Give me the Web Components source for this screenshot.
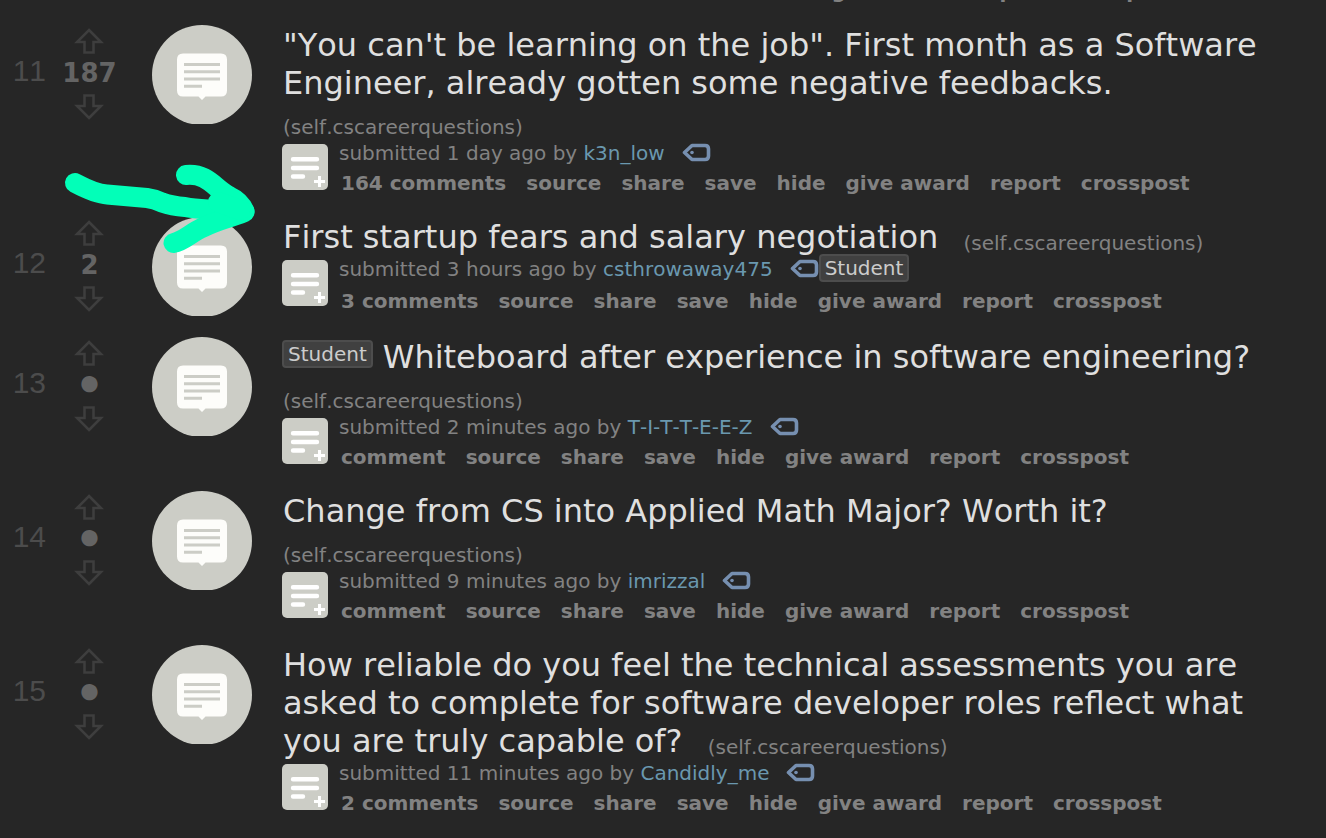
<!DOCTYPE html>
<html lang="en">
<head>
<meta charset="utf-8">
<title>cscareerquestions</title>
<style>
  body { margin: 0; background: #262626; color: #dfdfdf; font-family: Verdana, "DejaVu Sans", sans-serif; font-kerning: none; }
</style>
</head>
<body>
<link-listing>
  <entry-actions slot="previous" comments="20 comments"></entry-actions>
  <link-entry rank="11" score="187" author="k3n_low" age="1 day" comments="164 comments">"You can't be learning on the job". First month as a Software Engineer, already gotten some negative feedbacks.</link-entry>
  <link-entry rank="12" score="2" author="csthrowaway475" age="3 hours" comments="3 comments" author-flair="Student">First startup fears and salary negotiation</link-entry>
  <link-entry rank="13" score="•" author="T-I-T-T-E-E-Z" age="2 minutes" comments="comment" flair="Student">Whiteboard after experience in software engineering?</link-entry>
  <link-entry rank="14" score="•" author="imrizzal" age="9 minutes" comments="comment">Change from CS into Applied Math Major? Worth it?</link-entry>
  <link-entry rank="15" score="•" author="Candidly_me" age="11 minutes" comments="2 comments">How reliable do you feel the technical assessments you are asked to complete for software developer roles reflect what you are truly capable of?</link-entry>
  <hand-arrow slot="note"></hand-arrow>
</link-listing>

<script>
class Base extends HTMLElement {
  connectedCallback() {
    if (this.shadowRoot) return;
    this.attachShadow({ mode: "open" }).innerHTML = this.render();
  }
  attr(name) { return this.getAttribute(name) || ""; }
}

customElements.define("link-listing", class extends Base {
  render() {
    return `<style>
      :host { display: block; position: relative; overflow: hidden; }
      .previous { margin: -26px 0 17px 282px; }
      ::slotted(hand-arrow) { position: absolute; left: 60px; top: 160px; }
    </style>
    <div class="previous"><slot name="previous"></slot></div>
    <main><slot></slot></main>
    <slot name="note"></slot>`;
  }
});

customElements.define("entry-actions", class extends Base {
  render() {
    const items = [this.attr("comments"), "source", "share", "save", "hide", "give award", "report", "crosspost"];
    return `<style>
      :host { display: block; }
      ul { display: flex; gap: 20px; margin: 0; padding: 0 0 0 59px; list-style: none; }
      a { color: #828282; font-size: 20px; font-weight: bold; line-height: 34px; text-decoration: none; white-space: nowrap; }
    </style>
    <ul>${items.map(t => `<li><a href="#">${t}</a></li>`).join("")}</ul>`;
  }
});

customElements.define("flair-label", class extends Base {
  render() {
    return `<style>
      :host { display: inline-block; box-sizing: border-box; height: 28px; padding: 0 4px; border: 2px solid #4d4d4d;
        border-radius: 4px; background: #404040; color: #cccccc; font-size: 20px; line-height: 24px; }
    </style><slot></slot>`;
  }
});

customElements.define("vote-box", class extends Base {
  render() {
    const unscored = this.attr("score") === "•";
    return `<style>
      :host { display: flex; flex-direction: column; align-items: center; padding: 3px 0 0 0; }
      button { display: block; padding: 0; border: 0; background: none; height: 27px; margin-right: 1px; }
      svg { display: block; }
      path { fill: none; stroke: #3e3e3e; stroke-width: 2.600; }
      .score { height: 39px; line-height: 36px; font-size: 26px; font-weight: bold; color: #646464; }
      .dot { font-size: 46px; }
    </style>
    <button aria-label="upvote"><svg width="30" height="27"><path d="M15 2 27 14H19.500V24.500H10.500V14H3Z"/></svg></button>
    <span class="score ${unscored ? "dot" : ""}">${this.attr("score")}</span>
    <button aria-label="downvote"><svg width="30" height="27"><path d="M15 24 27 12H19.500V1.500H10.500V12H3Z"/></svg></button>`;
  }
});

customElements.define("self-thumb", class extends Base {
  render() {
    return `<style>
      :host, a, svg { display: block; }
    </style>
    <a href="#" aria-label="self post"><svg width="100" height="99">
      <circle cx="50" cy="50" r="50" fill="#cccdc6"/>
      <path d="M31 28.500H69Q75 28.500 75 34.500V65.500Q75 71.500 69 71.500H53.500L50 75 46.500 71.500H31Q25 71.500 25 65.500V34.500Q25 28.500 31 28.500Z" fill="#fdfdfa"/>
      <path d="M32 39.500H68M32 46.700H68M32 54H68M32 61.200H50" stroke="#cccdc6" stroke-width="3"/>
    </svg></a>`;
  }
});

customElements.define("link-entry", class extends Base {
  render() {
    const flair = this.attr("flair"), authorFlair = this.attr("author-flair");
    return `<style>
      :host { display: grid; grid-template-columns: 46px 87px 100px minmax(0, 1fr); }
      .rank { padding-top: 28px; color: #4c4c4c; font-family: Arial, "Liberation Sans", sans-serif; font-size: 30px; line-height: 36px; text-align: right; }
      self-thumb { margin-left: 19px; width: 100px; }
      .entry { padding: 1px 24px 17px 49px; }
      h2 { margin: 0 0 0 1px; font-size: 32px; line-height: 38px; font-weight: normal; }
      h2 .title { margin-right: 15px; color: #dfdfdf; text-decoration: none; }
      h2 flair-label { vertical-align: 7px; margin: 0 10px 0 -1px; }
      .domain { font-size: 20px; line-height: 20px; vertical-align: -2px; color: #828282; }
      .domain a { color: inherit; text-decoration: none; }
      .body { display: grid; grid-template-columns: 46px minmax(0, 1fr); }
      .expando { width: 46px; height: 46px; margin-top: 4px; padding: 0; border: 0; background: none; }
      svg { display: block; }
      .tagline { display: flex; align-items: flex-start; height: 26px; margin: 0 0 0 11px; color: #828282; font-size: 20px; line-height: 26px; white-space: pre; }
      .tagline a { color: #6a98af; text-decoration: none; }
      .tag { margin: 3px 0 0 17px; }
      .tagline flair-label { margin-top: -2px; }
      entry-actions { margin-left: -46px; }
      .flaired .tagline { height: 28px; }
      .flaired { padding-bottom: 2px; }
    </style>
    <span class="rank">${this.attr("rank")}</span>
    <vote-box score="${this.attr("score")}"></vote-box>
    <self-thumb></self-thumb>
    <div class="entry">
      <h2>${flair ? `<flair-label>${flair}</flair-label>` : ""}<a class="title" href="#"><slot></slot></a> <span class="domain">(<a href="#">self.cscareerquestions</a>)</span></h2>
      <div class="body ${authorFlair ? "flaired" : ""}">
        <button class="expando" aria-label="expand"><svg width="46" height="46">
          <rect width="46" height="46" rx="5" fill="#cccdc6"/>
          <path d="M11 15.200H35M11 24H35M11 32.500H21" stroke="#fff" stroke-width="4.400" stroke-linecap="round"/>
          <path d="M32 37.500H43M37.500 32V43" stroke="#fff" stroke-width="3"/>
        </svg></button>
        <div>
          <p class="tagline">submitted ${this.attr("age")} ago by <a href="#">${this.attr("author")}</a><svg class="tag" width="29" height="20">
            <path d="M10 2.500H23Q26.500 2.500 26.500 6V13Q26.500 16.500 23 16.500H10L2.500 9.500Z" fill="none" stroke="#768fb0" stroke-width="3.600" stroke-linejoin="round"/>
            <circle cx="10" cy="9.500" r="1.800" fill="#768fb0"/>
          </svg>${authorFlair ? `<flair-label>${authorFlair}</flair-label>` : ""}</p>
          <entry-actions comments="${this.attr("comments")}"></entry-actions>
        </div>
      </div>
    </div>`;
  }
});

customElements.define("hand-arrow", class extends Base {
  render() {
    return `<style>:host { display: block; pointer-events: none; } svg { display: block; }</style>
    <svg width="200" height="96" viewBox="60 160 200 96" fill="none" stroke="#02ffb8" stroke-width="20" stroke-linecap="round" stroke-linejoin="round">
      <path d="M75 183Q96 194 107 194.500L147 198Q155 199 162 202.500Q172 206 185 207Q200 210 244 211"/>
      <path d="M186 175Q196 174 204 178C214 183 219 191 230 196.500Q240 201 244.500 211"/>
      <path d="M173.500 243C184 241 190 233 204 227C220 219 228 219 244.500 212"/>
      <path d="M218 202 240 210"/>
    </svg>`;
  }
});
</script>
</body>
</html>
